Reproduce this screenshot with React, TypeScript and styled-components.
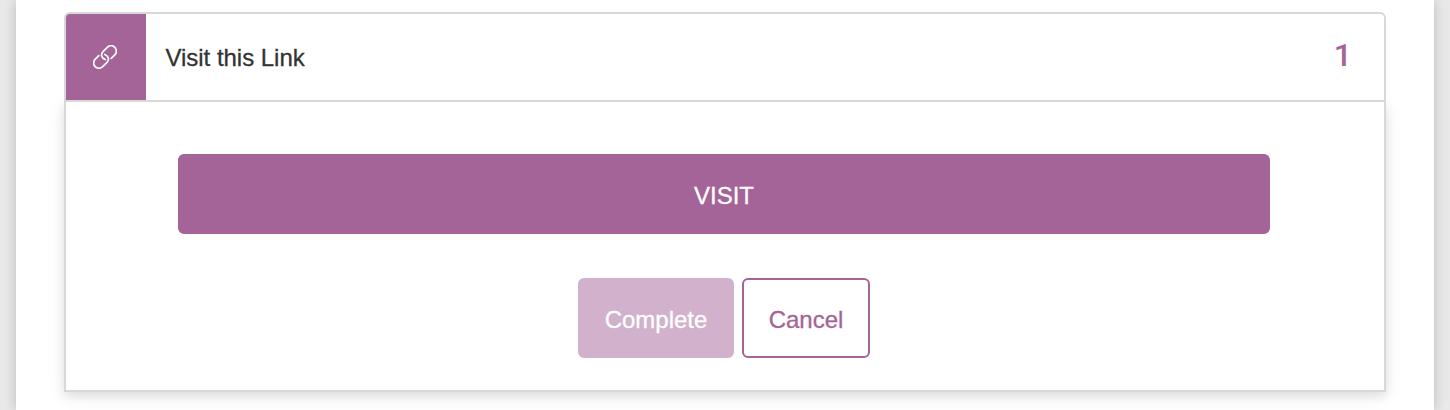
import React from "react";
import styled, { createGlobalStyle, css } from "styled-components";

const purple = "#a46497";
const line = "#d8d8d8";

const GlobalStyle = createGlobalStyle`
  * { box-sizing: border-box; }
  body {
    margin: 0;
    background: #e9e9e9;
    font-family: "Liberation Sans", Arial, sans-serif;
    -webkit-text-stroke: 0.3px currentColor;
    overflow: hidden;
  }
`;

const Page = styled.main`
  height: 410px;
  margin: 0 16px;
  padding: 12px 48px 0;
  background: #fff;
  box-shadow: 0 0 12px rgba(0, 0, 0, 0.2);
`;

const Header = styled.header`
  position: relative;
  display: flex;
  align-items: stretch;
  height: 90px;
  border: 2px solid ${line};
  border-radius: 6px 6px 0 0;
  background: #fff;
`;

const IconTile = styled.div`
  display: flex;
  align-items: center;
  justify-content: center;
  width: 80px;
  padding-right: 2px;
  border-top-left-radius: 4px;
  background: ${purple};
`;

const Title = styled.h2`
  flex: 1;
  margin: 0;
  padding-left: 19.5px;
  font-size: 24px;
  font-weight: 400;
  line-height: 88px;
  letter-spacing: -0.03px;
  color: #333;
`;

const Points = styled.span`
  padding-right: 32px;
  font-family: Roboto, sans-serif;
  font-size: 32px;
  font-weight: 500;
  line-height: 82px;
  color: ${purple};
  -webkit-text-stroke: 0;
`;

const Body = styled.section`
  height: 290px;
  padding: 52px 114px 0 112px;
  border: 2px solid ${line};
  border-top: 0;
  background: #fff;
  box-shadow: 0 4px 10px rgba(0, 0, 0, 0.1), 0 4px 20px rgba(0, 0, 0, 0.06);
`;

const Actions = styled.div`
  display: flex;
  justify-content: center;
  gap: 8px;
  margin-top: 44px;
`;

const Button = styled.button<{ $width: string; $outline?: boolean }>`
  display: flex;
  align-items: center;
  justify-content: center;
  width: ${(p) => p.$width};
  height: 80px;
  padding: 4px 0 0;
  border: 2px solid ${purple};
  border-radius: 6px;
  background: ${purple};
  color: #fff;
  font-family: inherit;
  font-size: 24px;
  line-height: 28px;
  -webkit-text-stroke: 0.3px currentColor;
  ${(p) => p.$outline && css`background: #fff; color: ${purple};`}
  &:disabled { border-color: #d1b1cb; background: #d1b1cb; }
`;

const LinkIcon = () => (
  <svg width="24" height="24" viewBox="0 0 24 24" fill="none" stroke="#fff" strokeWidth="1.7" strokeLinecap="round">
    <path d="M18.2 13.4 21.8 9.8A5.3 5.3 0 0 0 14.3 2.3L10.2 6.4C7.4 9.2 8.4 13 12.2 14.5" />
    <path d="M5.8 10.6 2.2 14.2A5.3 5.3 0 0 0 9.7 21.7L13.8 17.6C16.6 14.8 15.6 11 11.8 9.5" />
  </svg>
);

export default function App() {
  return (
    <>
      <GlobalStyle />
      <Page>
        <Header>
          <IconTile><LinkIcon /></IconTile>
          <Title>Visit this Link</Title>
          <Points>1</Points>
        </Header>
        <Body>
          <Button $width="100%">VISIT</Button>
          <Actions>
            <Button $width="156px" disabled>Complete</Button>
            <Button $width="128px" $outline>Cancel</Button>
          </Actions>
        </Body>
      </Page>
    </>
  );
}
